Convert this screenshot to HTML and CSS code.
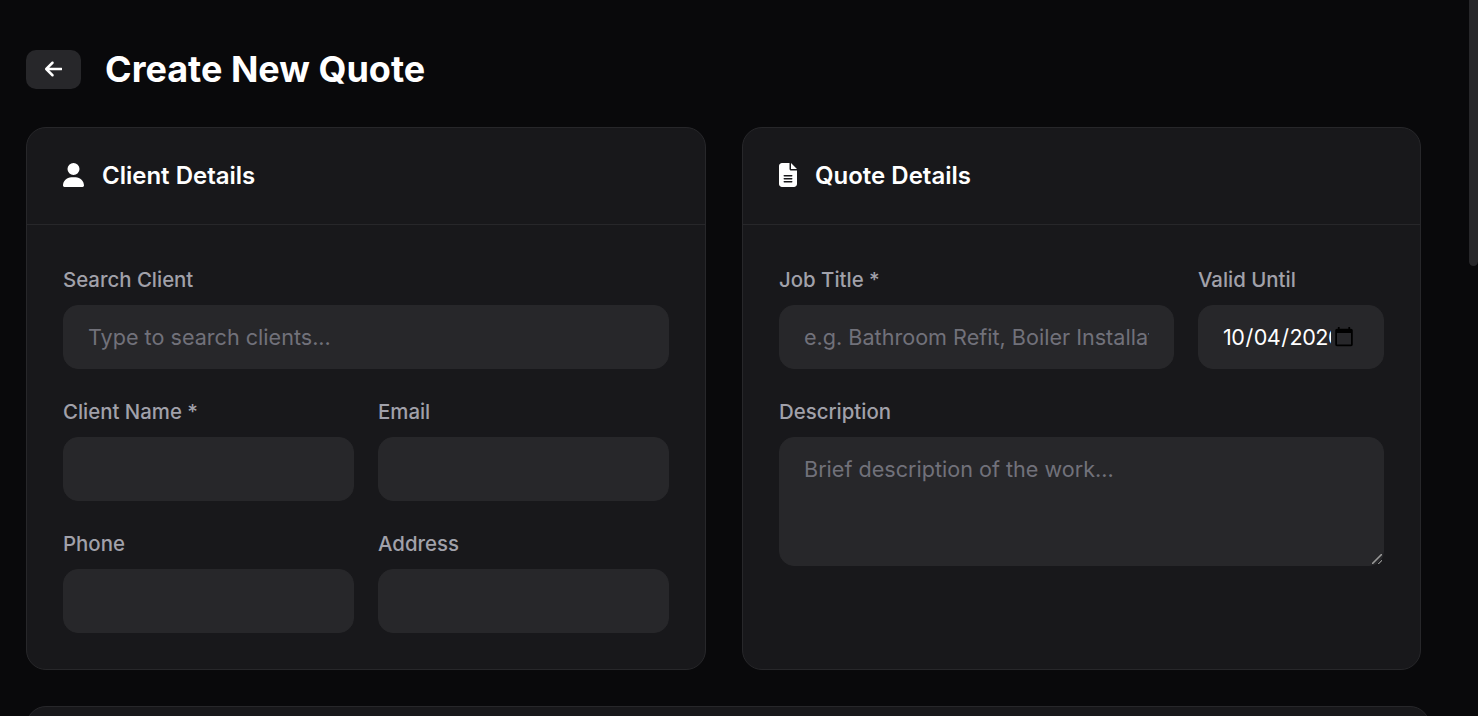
FILE: index.html
```html
<!DOCTYPE html>
<html lang="en">
<head>
    <meta charset="UTF-8">
    <meta name="viewport" content="width=device-width, initial-scale=1.0">
    <title>Create New Quote</title>
    <link rel="stylesheet" href="styles.css">
</head>
<body>

    <!-- Page header -->
    <div class="page-header">
        <button type="button" class="back-btn" aria-label="Back">
            <svg class="icon-back" viewBox="0 0 448 512"><path d="M9.4 233.4c-12.5 12.5-12.5 32.8 0 45.3l160 160c12.5 12.5 32.8 12.5 45.3 0s12.5-32.8 0-45.3L109.2 288 416 288c17.7 0 32-14.3 32-32s-14.3-32-32-32l-306.7 0L214.6 118.6c12.5-12.5 12.5-32.8 0-45.3s-32.8-12.5-45.3 0l-160 160z"/></svg>
        </button>
        <h1>Create New Quote</h1>
    </div>

    <div class="details-grid">

        <!-- Client details -->
        <section class="card">
            <div class="card-header">
                <svg class="icon-user" viewBox="0 0 448 512"><path d="M224 256A128 128 0 1 0 224 0a128 128 0 1 0 0 256zm-45.7 48C79.8 304 0 383.8 0 482.3C0 498.7 13.3 512 29.7 512H418.3c16.4 0 29.7-13.3 29.7-29.7C448 383.8 368.2 304 269.7 304H178.3z"/></svg>
                <h2>Client Details</h2>
            </div>
            <div class="card-body">
                <div class="field">
                    <label for="search">Search Client</label>
                    <input type="text" id="search" placeholder="Type to search clients...">
                </div>
                <div class="row-half">
                    <div class="field">
                        <label for="client-name">Client Name *</label>
                        <input type="text" id="client-name">
                    </div>
                    <div class="field">
                        <label for="email">Email</label>
                        <input type="email" id="email">
                    </div>
                </div>
                <div class="row-half">
                    <div class="field">
                        <label for="phone">Phone</label>
                        <input type="text" id="phone">
                    </div>
                    <div class="field">
                        <label for="address">Address</label>
                        <input type="text" id="address">
                    </div>
                </div>
            </div>
        </section>

        <!-- Quote details -->
        <section class="card">
            <div class="card-header">
                <svg class="icon-file" viewBox="0 0 384 512"><path d="M64 0C28.7 0 0 28.7 0 64V448c0 35.3 28.7 64 64 64H320c35.3 0 64-28.7 64-64V160H256c-17.7 0-32-14.3-32-32V0H64zM256 0V128H384L256 0zM112 256H272c8.8 0 16 7.2 16 16s-7.2 16-16 16H112c-8.8 0-16-7.2-16-16s7.2-16 16-16zm0 64H272c8.8 0 16 7.2 16 16s-7.2 16-16 16H112c-8.8 0-16-7.2-16-16s7.2-16 16-16zm0 64H272c8.8 0 16 7.2 16 16s-7.2 16-16 16H112c-8.8 0-16-7.2-16-16s7.2-16 16-16z"/></svg>
                <h2>Quote Details</h2>
            </div>
            <div class="card-body">
                <div class="row-date">
                    <div class="field">
                        <label for="job-title">Job Title *</label>
                        <input type="text" id="job-title" placeholder="e.g. Bathroom Refit, Boiler Installation">
                    </div>
                    <div class="field">
                        <label for="valid-until">Valid Until</label>
                        <input type="date" id="valid-until" class="input-date" value="2026-10-04">
                    </div>
                </div>
                <div class="field">
                    <label for="description">Description</label>
                    <textarea id="description" placeholder="Brief description of the work..."></textarea>
                </div>
            </div>
        </section>
    </div>

    <!-- Next card, below the fold -->
    <section class="card card-next"></section>

    <!-- Scrollbar thumb -->
    <div class="scroll-thumb"></div>

</body>
</html>
```

FILE: styles.css
```css
html {
    height: 100%;
    overflow: hidden;
    background-color: #09090b;
}

body {
    box-sizing: border-box;
    height: 100%;
    margin: 0;
    padding: 50px 48px 0 26px;
    overflow: hidden;
    font-family: 'Inter', 'Liberation Sans', sans-serif;
    color: #fff;
}

.scroll-thumb {
    position: fixed;
    top: 0;
    right: 0;
    width: 9px;
    height: 266px;
    background-color: #27272a;
    border-radius: 0 0 5px 5px;
}

.page-header {
    display: flex;
    align-items: center;
    gap: 24px;
    height: 39px;
    margin-bottom: 38px;
}

.back-btn {
    display: flex;
    align-items: center;
    justify-content: center;
    width: 55px;
    height: 39px;
    padding: 0 0 1px;
    background-color: #27272a;
    border: none;
    border-radius: 10px;
}

.icon-back {
    width: 17.5px;
    height: 20px;
    fill: #fff;
}

h1 {
    margin: 0 0 2px;
    font-size: 36px;
    font-weight: 700;
}

.details-grid {
    display: grid;
    grid-template-columns: 680px 679px;
    gap: 36px;
    margin-bottom: 36px;
}

.card {
    background-color: #18181b;
    border: 1px solid #27272a;
    border-radius: 20px;
}

.card-next {
    height: 60px;
}

.card-header {
    display: flex;
    align-items: center;
    gap: 18px;
    height: 94px;
    padding: 0 36px 2px;
    border-bottom: 1px solid #27272a;
}

.card-header h2 {
    margin: 0;
    font-size: 24px;
    font-weight: 600;
}

.icon-user {
    width: 21px;
    height: 24px;
    fill: #fff;
}

.icon-file {
    width: 18px;
    height: 24px;
    fill: #fff;
}

.card-body {
    display: flex;
    flex-direction: column;
    gap: 30px;
    padding: 42px 36px 36px;
}

.row-half {
    display: grid;
    grid-template-columns: 1fr 1fr;
    gap: 24px;
}

.row-date {
    display: grid;
    grid-template-columns: 1fr 186px;
    gap: 24px;
}

.field {
    min-width: 0;
}

label {
    display: block;
    margin-bottom: 12px;
    font-size: 20.4px;
    font-weight: 500;
    line-height: 26px;
    color: #a1a1aa;
}

input,
textarea {
    display: block;
    box-sizing: border-box;
    width: 100%;
    height: 64px;
    padding: 16px 24px;
    background-color: #27272a;
    border: 1px solid #27272a;
    border-radius: 15px;
    font-family: inherit;
    font-size: 21.6px;
    color: #fff;
}

.input-date {
    padding: 16px 26px 16px 23px;
    letter-spacing: -0.5px;
}

textarea {
    height: 129px;
    padding-top: 18px;
    resize: vertical;
}

textarea::-webkit-resizer {
    background: linear-gradient(135deg, transparent 40%, #111 43%, #999 46%, #999 54%, #111 57%, transparent 60%, transparent 76%, #888 78%, #888 84%, transparent 86%) 4px 4px / 10px 10px no-repeat;
}

input::placeholder,
textarea::placeholder {
    color: #71717a;
}
```
